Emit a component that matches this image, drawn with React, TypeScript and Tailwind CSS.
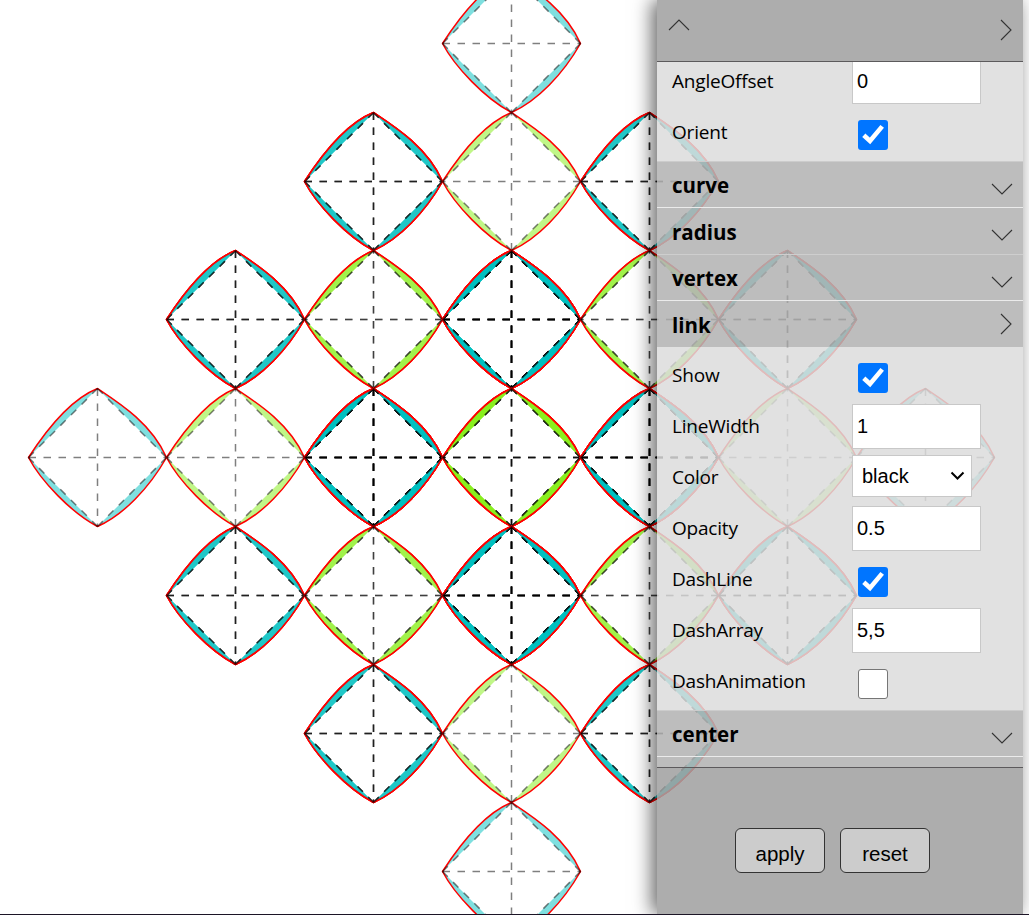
import React from "react";

const R = 69;
const CX = 511.5;
const CY = 457.5;

type Cell = { i: number; j: number; n: number };

function layerCount(i: number, j: number): number {
  const a = Math.abs(i);
  const b = Math.abs(j);
  if (a + b === 0) return 4;
  if (a + b === 1) return 8;
  if (a === 0 || b === 0) return 1;
  if (a + b === 2) return 2;
  return 3;
}

const cells: Cell[] = [];
for (let j = -3; j <= 3; j++) {
  for (let i = -3; i <= 3; i++) {
    if (Math.abs(i) + Math.abs(j) <= 3) cells.push({ i, j, n: layerCount(i, j) });
  }
}

const CURVE =
  "M-69 0C-53.8 -23.5 -27.6 -58 0 -69C20.7 -55.2 53.8 -34.5 69 0C51.7 30.4 26.2 57.3 0 69C-26.2 55.2 -56.6 23.5 -69 0Z";
const FILL = CURVE + "M-69 0L0 -69L69 0L0 69Z";

function Tile({ i, j, n }: Cell) {
  const odd = Math.abs(i + j) % 2 === 1;
  return (
    <g transform={`translate(${CX + i * 2 * R} ${CY + j * 2 * R})`}>
      {Array.from({ length: n }, (_, k) => (
        <g key={k} fill="none" strokeWidth={1.5}>
          <path d={FILL} fillRule="evenodd" fill={odd ? "#00bfbf" : "#82ee10"} fillOpacity={0.5} />
          <path d={CURVE} stroke="#ff0000" />
          <g
            transform={odd ? undefined : "rotate(180)"}
            stroke="#000"
            strokeOpacity={0.5}
            strokeDasharray="7.5 7.5"
          >
            <path d="M-69 0H69" />
            <path d="M0 -69V69" />
            <path d="M0 -69L-69 0" />
            <path d="M0 -69L69 0" />
            <path d="M-69 0L0 69" />
            <path d="M69 0L0 69" />
          </g>
        </g>
      ))}
    </g>
  );
}

function Chevron({ dir }: { dir: "up" | "down" | "right" }) {
  const d = dir === "up" ? "M1 11L11 1L21 11" : dir === "down" ? "M1 1L11 11L21 1" : "M1 1L11 11L1 21";
  const right = dir === "right";
  return (
    <svg width={right ? 12 : 22} height={right ? 22 : 12} fill="none" stroke="#333" strokeWidth={1.1}>
      <path d={d} />
    </svg>
  );
}

function Section({ title, open, className = "" }: { title: string; open?: boolean; className?: string }) {
  return (
    <div className={`flex shrink-0 justify-between bg-[rgba(180,180,180,0.88)] pl-[15px] ${className}`}>
      <span className="pt-[8px] text-[20.5px] leading-[30px] font-bold">{title}</span>
      <span className={open ? "pt-[12px] pr-[11px]" : "pt-[21px] pr-[10px]"}>
        <Chevron dir={open ? "right" : "down"} />
      </span>
    </div>
  );
}

function Row({ label, children }: { label: string; children: React.ReactNode }) {
  return (
    <div className="flex h-[51px] shrink-0">
      <span className="w-[195px] shrink-0 pl-[15px] pt-[9px] text-[19px] leading-[28px] tracking-[-0.2px]">
        {label}
      </span>
      {children}
    </div>
  );
}

function Field({ value }: { value: string }) {
  return (
    <input
      readOnly
      value={value}
      className="mt-px h-[45px] w-[129px] border border-[#c8c8c8] bg-white pl-[4px] font-['Liberation_Sans',Arial,sans-serif] text-[20px] outline-none"
    />
  );
}

function Check({ on }: { on?: boolean }) {
  return (
    <span
      className={`mt-[11px] ml-[6px] flex h-[30px] w-[30px] items-center justify-center rounded-[3px] ${
        on ? "bg-[#0075ff]" : "border border-[#767676] bg-white"
      }`}
    >
      {on && (
        <svg width="30" height="30" fill="none" stroke="#fff" strokeWidth="4.6">
          <path d="M5.8 15.2L12 21L24.2 6.4" />
        </svg>
      )}
    </span>
  );
}

const btn =
  "h-[45px] w-[90px] rounded-[6px] border border-[#333] bg-[#cccccc] pt-[7px] font-['Liberation_Sans',Arial,sans-serif] text-[20.5px]";

export default function App() {
  return (
    <div className="relative flex h-[915px] w-[1029px] flex-col overflow-hidden bg-white font-['Open_Sans','Noto_Sans',sans-serif] text-black">
      <svg className="absolute inset-0" width="1029" height="914">
        {cells.map((c) => (
          <Tile key={`${c.i},${c.j}`} {...c} />
        ))}
      </svg>

      <div className="relative ml-[657px] flex h-[914px] w-[366px] shrink-0 flex-col shadow-[-5px_0_18px_rgba(0,0,0,0.6)]">
        <div className="flex h-[62px] shrink-0 justify-between border-b border-[#5c5a5c] bg-[rgba(161,161,161,0.87)] pl-[11px] pr-[11px]">
          <span className="pt-[19px]">
            <Chevron dir="up" />
          </span>
          <span className="pt-[19px]">
            <Chevron dir="right" />
          </span>
        </div>

        <div className="flex h-[705px] shrink-0 flex-col overflow-hidden">
          <div className="flex h-[99px] shrink-0 flex-col overflow-hidden bg-[rgba(220,220,220,0.85)]">
            <div className="-mt-[4px] flex flex-col">
              <Row label="AngleOffset">
                <Field value="0" />
              </Row>
              <Row label="Orient">
                <Check on />
              </Row>
            </div>
          </div>
          <Section title="curve" className="h-[46px] border-t border-[#cccccc]" />
          <div className="h-px shrink-0 bg-[#ebebeb]" />
          <Section title="radius" className="h-[46px] [&>span:first-child]:pt-[9px]" />
          <div className="h-px shrink-0 bg-[#cecece]" />
          <Section title="vertex" className="h-[45px]" />
          <div className="h-px shrink-0 bg-[#ebebeb]" />
          <Section title="link" open className="h-[46px] [&>span:first-child]:pt-[9px]" />
          <div className="flex h-[363px] shrink-0 flex-col bg-[rgba(220,220,220,0.85)] pt-[5px]">
            <Row label="Show">
              <Check on />
            </Row>
            <Row label="LineWidth">
              <Field value="1" />
            </Row>
            <Row label="Color">
              <div className="mt-px flex h-[42px] w-[120px] items-center justify-between border border-[#c8c8c8] bg-white pl-[9px] pr-[6px] font-['Liberation_Sans',Arial,sans-serif] text-[20px]">
                <span>black</span>
                <svg width="15" height="10" fill="none" stroke="#000" strokeWidth="2">
                  <path d="M1.5 1.5L7.5 7.5L13.5 1.5" />
                </svg>
              </div>
            </Row>
            <Row label="Opacity">
              <Field value="0.5" />
            </Row>
            <Row label="DashLine">
              <Check on />
            </Row>
            <Row label="DashArray">
              <Field value="5,5" />
            </Row>
            <Row label="DashAnimation">
              <Check />
            </Row>
          </div>
          <Section title="center" className="h-[46px] border-t border-[#cccccc]" />
          <div className="h-px shrink-0 bg-[#ebebeb]" />
          <div className="h-[10px] shrink-0 bg-[rgba(180,180,180,0.88)]" />
        </div>

        <div className="flex flex-1 justify-center gap-[15px] border-t border-[#5c5a5c] bg-[rgba(161,161,161,0.87)] pt-[60px] pr-[15px]">
          <button className={btn}>apply</button>
          <button className={btn}>reset</button>
        </div>
      </div>

      <div className="relative h-px shrink-0 bg-[#1c1526]" />
    </div>
  );
}
